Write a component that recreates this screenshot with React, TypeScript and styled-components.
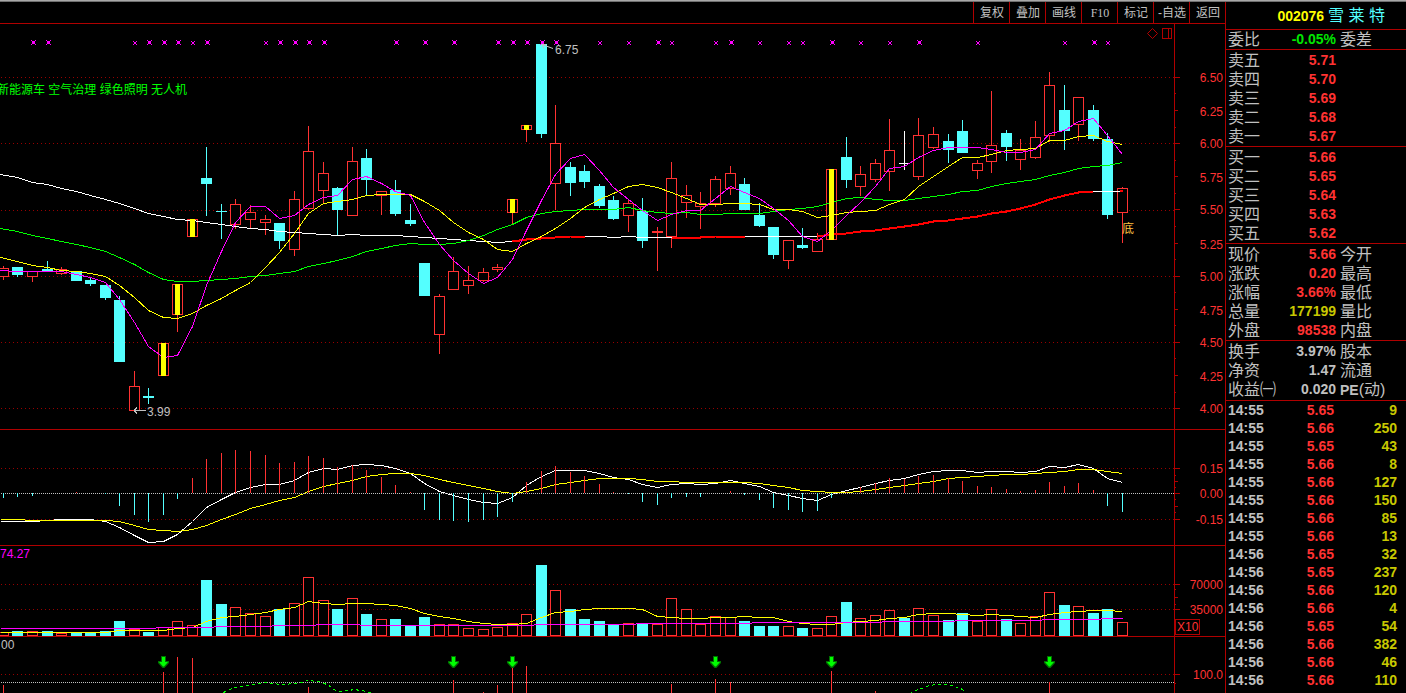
import React from "react";
import styled, { createGlobalStyle } from "styled-components";

const C = {
  line: "#b00000",
  grid: "#980000",
  red: "#ff3232",
  cyan: "#54ffff",
  yellow: "#ffff00",
  gold: "#c8c800",
  grey: "#c0c0c0",
  magenta: "#ff00ff",
  green: "#00ff00",
};

const SANS = `"Liberation Sans", "Noto Sans CJK SC", sans-serif`;

const GlobalStyle = createGlobalStyle`
  body { margin: 0; background: #000; color: ${C.grey}; font-family: ${SANS}; }
  * { box-sizing: border-box; }
`;

/* ---------- page parts ---------- */

const Screen = styled.div`
  min-height: 100vh;
  display: flex;
  flex-direction: column;
  background: #000;
`;

const WindowEdge = styled.div`
  height: 2px;
  border-top: 1px solid #a8a8a8;
  background: #707070;
`;

const Workspace = styled.main`
  flex: 1;
  display: grid;
  grid-template-columns: minmax(0, 1fr) 181px;
`;

const Charts = styled.section`
  display: flex;
  flex-direction: column;
  min-width: 0;
`;

const Toolbar = styled.nav`
  height: 22px;
  display: flex;
  justify-content: flex-end;
  border-bottom: 1px solid ${C.line};
`;

const ToolButton = styled.button<{ $latin?: boolean }>`
  width: 36px;
  padding: 0 0 0 1px;
  border: 0;
  border-left: 1px solid ${C.line};
  background: none;
  color: ${C.grey};
  font-family: ${(p) => (p.$latin ? `"Liberation Serif", serif` : SANS)};
  font-size: 12px;
  line-height: 20px;
  white-space: nowrap;
  cursor: pointer;
`;

const Panel = styled.div<{ $last?: boolean }>`
  border-bottom: ${(p) => (p.$last ? "0" : `1px solid ${C.line}`)};
`;

const Plot = styled.svg<{ $h: number }>`
  display: block;
  width: 100%;
  height: ${(p) => p.$h}px;
  font-family: ${SANS};
  font-size: 12px;
`;

const Side = styled.aside`
  border-left: 1px solid ${C.line};
`;

const StockHeader = styled.h1`
  height: 28px;
  margin: 0;
  padding-right: 21px;
  display: flex;
  align-items: center;
  justify-content: flex-end;
  gap: 4px;
  border-bottom: 1px solid ${C.line};
  font-size: 16px;
  font-weight: 400;
  line-height: 20px;
  color: ${C.cyan};
`;

const Code = styled.span`
  font-size: 14px;
  font-weight: 700;
  color: ${C.yellow};
`;

const Block = styled.div<{ $pad: string }>`
  padding: ${(p) => p.$pad};
  border-bottom: 1px solid ${C.line};
`;

const DataTable = styled.table`
  width: 100%;
  table-layout: fixed;
  border-collapse: collapse;
`;

const Label = styled.th<{ $second?: boolean }>`
  width: ${(p) => (p.$second ? "auto" : "50px")};
  height: 19px;
  padding: 0 0 0 ${(p) => (p.$second ? 4 : 2)}px;
  font-size: 16px;
  font-weight: 400;
  line-height: 19px;
  text-align: left;
  white-space: nowrap;
`;

const Latin = styled.span`
  font-size: 14px;
  font-weight: 700;
  line-height: 1;
`;

const Value = styled.td<{ $color: string }>`
  width: 60px;
  height: 19px;
  padding: 0;
  color: ${(p) => p.$color};
  font-size: 14px;
  font-weight: 700;
  line-height: 19px;
  text-align: right;
`;

const Tick = styled.td<{ $kind: "time" | "price" | "lot" }>`
  width: ${(p) => (p.$kind === "lot" ? "auto" : "54px")};
  height: 18px;
  padding: ${(p) => (p.$kind === "time" ? "0 0 0 2px" : p.$kind === "lot" ? "0 9px 0 0" : "0")};
  color: ${(p) => ({ time: C.grey, price: C.red, lot: C.gold })[p.$kind]};
  font-size: 14px;
  font-weight: 700;
  line-height: 18px;
  text-align: ${(p) => (p.$kind === "time" ? "left" : "right")};
`;

/* ---------- chart data ---------- */

type Kind = "u" | "d" | "s" | "w" | "f";
/* kind, body top, body bottom, high, low, volume top, MACD bar end */
type Bar = [Kind, number, number, number, number, number, number];

const bars: Bar[] = [
  ["u", 268, 276, 266, 279, 632, 498], ["d", 267, 274, 267, 276, 631, 497], ["u", 271, 276, 271, 281, 631, 496],
  ["d", 269, 271, 261, 271, 631, 493], ["u", 269, 273, 267, 274, 633, 493], ["d", 271, 280, 271, 280, 633, 492],
  ["d", 280, 283, 277, 285, 633, 493], ["d", 285, 297, 285, 299, 631, 494], ["d", 300, 361, 296, 361, 621, 506],
  ["u", 386, 410, 371, 410, 629, 515], ["d", 396, 397, 388, 403, 632, 522], ["s", 343, 375, 343, 375, 627, 515],
  ["s", 284, 314, 284, 331, 621, 499], ["s", 219, 236, 219, 236, 625, 478], ["d", 178, 183, 147, 215, 580, 459],
  ["d", 211, 211, 204, 238, 604, 453], ["u", 204, 224, 199, 228, 607, 450], ["u", 212, 219, 205, 227, 613, 451],
  ["u", 219, 222, 215, 234, 616, 455], ["d", 223, 240, 223, 248, 609, 463], ["u", 199, 249, 191, 255, 603, 462],
  ["u", 151, 208, 126, 209, 577, 456], ["u", 173, 190, 162, 202, 600, 458], ["d", 188, 209, 187, 234, 609, 467],
  ["u", 161, 215, 147, 215, 598, 465], ["d", 158, 179, 149, 194, 614, 470], ["u", 191, 195, 191, 214, 619, 477],
  ["d", 190, 213, 180, 215, 619, 485], ["d", 220, 223, 204, 225, 625, 492], ["d", 263, 295, 263, 295, 617, 510],
  ["u", 296, 334, 294, 353, 624, 520], ["u", 271, 289, 257, 289, 624, 521], ["u", 280, 285, 266, 293, 628, 522],
  ["u", 272, 280, 268, 281, 629, 520], ["u", 267, 269, 264, 271, 627, 517], ["s", 199, 212, 199, 223, 623, 502],
  ["s", 125, 129, 125, 141, 614, 482], ["d", 44, 133, 44, 137, 565, 471], ["u", 143, 183, 105, 209, 590, 466],
  ["d", 167, 182, 162, 195, 609, 472], ["d", 171, 181, 165, 187, 619, 476], ["d", 186, 205, 184, 207, 621, 484],
  ["d", 200, 218, 196, 219, 625, 492], ["u", 203, 215, 200, 231, 623, 494], ["d", 211, 240, 198, 247, 624, 502],
  ["f", 231, 232, 227, 270, 624, 505], ["u", 178, 236, 162, 247, 598, 498], ["u", 195, 202, 185, 217, 609, 497],
  ["u", 203, 206, 192, 228, 624, 497], ["u", 179, 203, 176, 206, 616, 493], ["u", 173, 188, 166, 194, 617, 491],
  ["d", 184, 209, 178, 209, 621, 495], ["d", 215, 225, 203, 226, 626, 500], ["d", 227, 254, 227, 258, 626, 508],
  ["u", 240, 260, 240, 268, 626, 510], ["d", 245, 247, 228, 248, 628, 512], ["u", 239, 251, 233, 251, 628, 511],
  ["s", 169, 239, 169, 239, 616, 498], ["d", 157, 179, 137, 187, 602, 492], ["u", 174, 186, 166, 195, 618, 487],
  ["u", 163, 179, 159, 181, 615, 483], ["u", 150, 171, 119, 190, 610, 478], ["w", 163, 163, 131, 169, 618, 479],
  ["u", 135, 176, 118, 179, 608, 476], ["u", 134, 147, 127, 148, 615, 475], ["d", 141, 149, 134, 162, 620, 478],
  ["d", 131, 152, 120, 152, 613, 481], ["u", 163, 170, 160, 178, 621, 486], ["u", 145, 161, 91, 172, 609, 487],
  ["d", 133, 146, 130, 160, 619, 489], ["u", 150, 159, 139, 169, 623, 491], ["u", 137, 157, 121, 158, 616, 490],
  ["u", 85, 135, 72, 141, 592, 482], ["d", 110, 130, 85, 149, 605, 486], ["u", 97, 124, 97, 140, 606, 483],
  ["d", 110, 138, 105, 140, 613, 490], ["d", 139, 214, 133, 218, 609, 506], ["u", 188, 212, 187, 242, 622, 512],
];

const ma5 = [270, 271, 271, 271, 271, 274, 277, 282, 299, 322, 346, 357, 355, 326, 285, 251, 222, 206, 206, 218, 215, 204, 197, 195, 179, 176, 183, 191, 195, 222, 244, 260, 273, 283, 277, 259, 230, 200, 174, 158, 154, 170, 187, 199, 210, 220, 214, 210, 210, 198, 186, 192, 198, 208, 220, 236, 241, 230, 215, 202, 186, 168, 166, 157, 150, 147, 147, 147, 149, 152, 152, 149, 133, 130, 121, 118, 135, 154];
const ma10 = [257, 261, 265, 267, 270, 271, 273, 276, 285, 297, 310, 317, 318, 313, 305, 298, 290, 282, 267, 252, 233, 213, 203, 201, 199, 195, 194, 194, 194, 201, 210, 222, 232, 239, 249, 251, 243, 236, 228, 218, 207, 199, 193, 186, 184, 187, 192, 198, 204, 204, 203, 203, 204, 209, 209, 211, 217, 215, 212, 211, 210, 204, 199, 186, 176, 166, 157, 157, 154, 150, 149, 148, 140, 140, 136, 135, 141, 144];
const ma30 = [228, 231, 235, 238, 241, 244, 247, 251, 257, 264, 272, 279, 281, 281, 280, 279, 278, 276, 275, 273, 271, 266, 263, 260, 256, 251, 248, 245, 243, 244, 244, 243, 240, 235, 229, 224, 217, 213, 211, 210, 209, 209, 209, 207, 210, 212, 213, 212, 214, 214, 213, 213, 213, 211, 209, 208, 206, 202, 198, 197, 199, 200, 200, 198, 196, 194, 191, 190, 186, 183, 181, 179, 175, 172, 168, 166, 165, 162];
const ma60 = [174, 177, 182, 184, 188, 191, 195, 199, 203, 208, 213, 216, 219, 220, 222, 224, 226, 228, 229, 231, 232, 233, 234, 235, 234, 235, 235, 235, 236, 237, 238, 239, 240, 241, 242, 241, 239, 238, 237, 236, 236, 236, 237, 236, 237, 237, 237, 237, 237, 236, 236, 236, 236, 236, 236, 236, 236, 234, 233, 231, 230, 228, 226, 224, 221, 220, 218, 216, 213, 211, 208, 204, 199, 195, 192, 191, 191, 191];
const dif = [521, 521, 521, 520, 519, 519, 519, 521, 527, 535, 542, 541, 534, 521, 507, 499, 492, 487, 484, 484, 480, 472, 468, 469, 465, 464, 465, 468, 473, 483, 491, 495, 499, 502, 503, 497, 485, 476, 470, 470, 470, 473, 477, 479, 484, 487, 484, 483, 484, 483, 480, 483, 486, 492, 495, 498, 500, 494, 490, 487, 483, 480, 478, 474, 471, 470, 470, 472, 471, 471, 472, 471, 466, 467, 464, 468, 478, 482];
const dea = [519, 519, 520, 520, 520, 520, 520, 520, 521, 525, 529, 530, 531, 529, 525, 519, 514, 508, 504, 500, 497, 491, 486, 483, 480, 476, 474, 473, 473, 475, 479, 482, 485, 488, 491, 493, 491, 488, 484, 482, 480, 478, 478, 478, 479, 481, 481, 482, 482, 482, 482, 482, 483, 485, 487, 490, 491, 492, 492, 491, 489, 487, 485, 483, 481, 478, 477, 476, 475, 474, 474, 473, 472, 471, 469, 469, 471, 473];
const vol5 = [632, 632, 632, 632, 632, 632, 632, 632, 630, 630, 630, 630, 628, 627, 621, 617, 616, 614, 612, 609, 607, 601, 603, 604, 603, 603, 604, 605, 608, 613, 616, 618, 621, 623, 624, 624, 623, 617, 612, 611, 609, 608, 608, 608, 609, 616, 617, 618, 618, 617, 617, 616, 617, 617, 621, 623, 624, 624, 622, 621, 620, 618, 617, 614, 613, 613, 614, 615, 614, 615, 616, 617, 614, 612, 611, 610, 610, 611];
const volLong: [number, number][] = [
  [0, 628], [155, 628], [156, 627], [213, 627], [214, 626], [271, 626], [272, 625], [315, 625], [316, 624], [359, 624], [360, 625],
  [533, 625], [534, 624], [635, 624], [636, 623], [751, 623], [752, 622], [881, 622], [882, 621], [954, 621], [955, 620],
  [1041, 620], [1042, 619], [1100, 619], [1101, 618], [1122, 618],
];

/* runs where the long average is in its strong phase */
const strongRuns: [number, number][] = [[35, 40], [46, 51], [56, 75]];

const bigMarks = [2, 3, 10, 11, 12, 14, 19, 20, 21, 22, 27, 29, 31, 34, 35, 36, 37, 38, 45, 50, 57, 63, 75];
const smallMarks = [9, 13, 18, 41, 43, 46, 49, 52, 54, 55, 59, 61, 67, 73, 76];

const spikes: [number, number][] = [
  [0, 685], [11, 672], [12, 657], [13, 658], [21, 687], [31, 680], [33, 692], [34, 685], [35, 668], [36, 666],
  [46, 684], [49, 679], [50, 682], [57, 671], [60, 691], [72, 682],
];
const signals = [11, 31, 35, 49, 57, 72];

const trendLeft: [number, number][] = [
  [223, 692], [229, 689], [235, 687], [247, 685], [264, 682], [270, 683], [283, 684], [295, 683], [301, 682], [307, 680],
  [318, 681], [324, 683], [330, 686], [336, 691], [348, 690], [354, 689], [366, 691], [372, 693],
];
const trendRight: [number, number][] = [
  [909, 693], [918, 689], [929, 685], [936, 684], [947, 684], [954, 686], [960, 688], [967, 692],
];

const xAt = (i: number) => Math.round(2.95 + 14.532 * i);
const toPoints = (pts: [number, number][]) => pts.map(([x, y]) => `${x + 0.5},${y + 0.5}`).join(" ");
const series = (ys: number[], from = 0) => ys.map((y, k) => [k + from === 0 ? 0 : xAt(k + from), y] as [number, number]);

/* ---------- chart pieces ---------- */

const Line = ({ pts, color, width = 1, dash }: { pts: [number, number][]; color: string; width?: number; dash?: string }) => (
  <polyline points={toPoints(pts)} fill="none" stroke={color} strokeWidth={width} strokeDasharray={dash} shapeRendering="crispEdges" />
);

const Grid = ({ y, color = C.grid, step = 4 }: { y: number; color?: string; step?: number }) => (
  <line x1={1} x2={1174} y1={y + 0.5} y2={y + 0.5} stroke={color} strokeDasharray={`1 ${step - 1}`} shapeRendering="crispEdges" />
);

const AxisTick = ({ y, size }: { y: number; size: number }) => (
  <rect x={1175} y={y} width={size} height={1} fill={C.line} />
);

const AxisLabel = ({ y, children }: { y: number; children: React.ReactNode }) => (
  <text x={1223} y={y + 5} textAnchor="end" fill={C.red}>{children}</text>
);

const Spine = ({ top, height }: { top: number; height: number }) => (
  <rect x={1174} y={top} width={1} height={height} fill={C.line} />
);

const Candle = ({ x, bar }: { x: number; bar: Bar }) => {
  const [kind, top, bottom, high, low] = bar;
  const color = kind === "d" ? C.cyan : kind === "w" ? "#ffffff" : C.red;
  const h = bottom - top + 1;
  const solid = kind === "d" || kind === "w" || kind === "f";
  return (
    <g shapeRendering="crispEdges">
      {high < top && <rect x={x} y={high} width={1} height={top - high} fill={color} />}
      {low > bottom && <rect x={x} y={bottom + 1} width={1} height={low - bottom} fill={color} />}
      {solid ? (
        <rect x={x - 5} y={top} width={kind === "w" ? 9 : 11} height={h} fill={color} />
      ) : (
        <rect x={x - 4.5} y={top + 0.5} width={10} height={h - 1} fill="#000" stroke={color} />
      )}
    </g>
  );
};

const Mark = ({ x, big }: { x: number; big?: boolean }) => (
  <path
    transform={`translate(${x} 0)`}
    shapeRendering="crispEdges"
    fill={C.magenta}
    d={
      big
        ? "M-1 40h1v1h-1zM3 40h1v1h-1zM0 41h3v3h-3zM-1 44h1v1h-1zM3 44h1v1h-1z"
        : "M-1 41h1v1h-1zM2 41h1v1h-1zM0 42h2v2h-2zM-1 44h1v1h-1zM2 44h1v1h-1z"
    }
  />
);

const Signal = ({ x }: { x: number }) => (
  <g transform={`translate(${x + 0.5} 0)`}>
    <path d="M-2.5 656h5v5h3v2l-4.500 5h-2l-4.500-5v-2h3z" fill="#007000" />
    <path d="M-1.500 657h3v5h3l-4 4.500h-1l-4-4.500h3z" fill={C.green} />
  </g>
);

const PricePanel = () => (
  <Panel>
    <Plot $h={405} viewBox="0 24 1225 405" preserveAspectRatio="xMaxYMin slice" role="img" aria-label="日K线">
      {[77, 143, 210, 276, 342, 408].map((y) => <Grid key={y} y={y} />)}
      <Spine top={24} height={405} />
      {Array.from({ length: 21 }, (_, k) => (
        <AxisTick key={k} y={Math.round(76.900 + k * 16.560)} size={k % 4 === 0 ? 5 : k % 2 === 0 ? 3 : 1} />
      ))}
      {Array.from({ length: 11 }, (_, k) => (
        <AxisLabel key={k} y={Math.round(76.900 + k * 33.120) + (k % 2)}>{(6.5 - k * 0.25).toFixed(2)}</AxisLabel>
      ))}
      {bars.map((b, i) => <Candle key={i} x={xAt(i)} bar={b} />)}
      <Line pts={series(ma60)} color="#ffffff" />
      {strongRuns.map(([a, b]) => (
        <Line key={a} pts={series(ma60.slice(a, b + 1), a)} color="#ff0000" width={2} />
      ))}
      <rect x={1120} y={190} width={3} height={2} fill="#ff0000" />
      <Line pts={series(ma30)} color={C.green} />
      <Line pts={series(ma10)} color={C.yellow} />
      <Line pts={series(ma5)} color={C.magenta} />
      {bars.map(([kind, top, bottom], i) =>
        kind === "s" ? <rect key={i} x={xAt(i) - 2} y={top} width={5} height={bottom - top + 1} fill={C.yellow} /> : null,
      )}
      {bigMarks.map((i) => <Mark key={i} x={xAt(i)} big />)}
      {smallMarks.map((i) => <Mark key={i} x={xAt(i)} />)}
      <text x={-3} y={94} fill={C.green}>新能源车 空气治理 绿色照明 无人机</text>
      <path d="M134 410.500h12M134 410.500l3-3M134 410.500l3 3" stroke={C.grey} fill="none" shapeRendering="crispEdges" />
      <text x={147} y={416} fill={C.grey}>3.99</text>
      <path d="M542 44.500l11 4M542 44.500h4M542 44.500l2 4" stroke={C.grey} fill="none" />
      <text x={555} y={54} fill={C.grey}>6.75</text>
      <text x={1122} y={233} fill="#ffc040">底</text>
      <path d="M1152.500 28.500l5 5l-5 5l-5-5z" stroke={C.line} fill="none" />
      <path d="M1162.500 28.500h9v10h-9zM1168.500 28.500v10" stroke={C.line} fill="none" shapeRendering="crispEdges" />
    </Plot>
  </Panel>
);

const MacdPanel = () => (
  <Panel>
    <Plot $h={115} viewBox="0 430 1225 115" preserveAspectRatio="xMaxYMin slice" role="img" aria-label="MACD">
      <Grid y={468} />
      <Grid y={519} />
      <Spine top={430} height={115} />
      {[468, 475, 481, 487, 493, 499, 506, 512, 519].map((y, k) => (
        <AxisTick key={y} y={y} size={k % 4 === 0 ? 5 : k % 2 === 0 ? 3 : 1} />
      ))}
      <AxisLabel y={468}>0.15</AxisLabel>
      <AxisLabel y={493}>0.00</AxisLabel>
      <AxisLabel y={519}>-0.15</AxisLabel>
      <Line pts={series(dif)} color="#ffffff" />
      <Line pts={series(dea)} color={C.yellow} />
      <Grid y={493} color={C.grey} step={2} />
      {bars.map((b, i) =>
        b[6] === 493 ? null : (
          <rect key={i} x={xAt(i)} y={Math.min(b[6], 493)} width={1} height={Math.abs(b[6] - 493)} fill={b[6] < 493 ? C.red : C.cyan} />
        ),
      )}
    </Plot>
  </Panel>
);

const VolumePanel = () => (
  <Panel>
    <Plot $h={90} viewBox="0 546 1225 90" preserveAspectRatio="xMaxYMin slice" role="img" aria-label="成交量">
      <Grid y={584} />
      <Grid y={609} />
      <Spine top={546} height={90} />
      {[584, 589, 597, 604, 609].map((y, k) => (
        <AxisTick key={y} y={y} size={k % 4 === 0 ? 5 : k % 2 === 0 ? 3 : 1} />
      ))}
      <AxisLabel y={584}>70000</AxisLabel>
      <AxisLabel y={609}>35000</AxisLabel>
      {bars.map((b, i) => {
        const x = xAt(i);
        return b[0] === "d" || b[0] === "w" ? (
          <rect key={i} x={x - 5} y={b[5]} width={11} height={636 - b[5]} fill={C.cyan} />
        ) : (
          <rect key={i} x={x - 4.5} y={b[5] + 0.5} width={10} height={635 - b[5]} fill="#000" stroke={C.red} shapeRendering="crispEdges" />
        );
      })}
      <Line pts={series(vol5)} color={C.yellow} />
      <Line pts={volLong} color={C.magenta} />
      <text x={0} y={558} fill={C.magenta}>74.27</text>
      <rect x={1175.5} y={619.5} width={24} height={15} fill="#000" stroke={C.line} />
      <text x={1177} y={631} fill={C.red}>X10</text>
    </Plot>
  </Panel>
);

const SignalPanel = () => (
  <Panel $last>
    <Plot $h={56} viewBox="0 637 1225 56" preserveAspectRatio="xMaxYMin slice" role="img" aria-label="信号指标">
      <Grid y={674} />
      <Grid y={682} color={C.grey} step={2} />
      <Spine top={637} height={56} />
      <AxisTick y={674} size={5} />
      <AxisTick y={683} size={1} />
      <AxisLabel y={674}>100.0</AxisLabel>
      {spikes.map(([i, y]) => <rect key={i} x={xAt(i)} y={y} width={1} height={693 - y} fill={C.red} />)}
      <Line pts={trendLeft} color={C.green} dash="3 3" />
      <Line pts={trendRight} color={C.green} dash="3 3" />
      {signals.map((i) => <Signal key={i} x={xAt(i)} />)}
      <text x={1} y={649} fill={C.grey}>00</text>
    </Plot>
  </Panel>
);

/* ---------- side panel ---------- */

type QuoteRow = { label: string; value: string; color?: string; second?: React.ReactNode };

const QuoteBlock = ({ rows, pad = "1px 0 0" }: { rows: QuoteRow[]; pad?: string }) => (
  <Block $pad={pad}>
    <DataTable>
      <tbody>
        {rows.map((r) => (
          <tr key={r.label}>
            <Label scope="row">{r.label}</Label>
            <Value $color={r.color ?? C.red}>{r.value}</Value>
            <Label as={r.second ? "th" : "td"} $second>{r.second}</Label>
          </tr>
        ))}
      </tbody>
    </DataTable>
  </Block>
);

const asks: QuoteRow[] = [
  { label: "卖五", value: "5.71" }, { label: "卖四", value: "5.70" }, { label: "卖三", value: "5.69" },
  { label: "卖二", value: "5.68" }, { label: "卖一", value: "5.67" },
];
const bids: QuoteRow[] = [
  { label: "买一", value: "5.66" }, { label: "买二", value: "5.65" }, { label: "买三", value: "5.64" },
  { label: "买四", value: "5.63" }, { label: "买五", value: "5.62" },
];
const quote: QuoteRow[] = [
  { label: "现价", value: "5.66", second: "今开" },
  { label: "涨跌", value: "0.20", second: "最高" },
  { label: "涨幅", value: "3.66%", second: "最低" },
  { label: "总量", value: "177199", color: C.gold, second: "量比" },
  { label: "外盘", value: "98538", second: "内盘" },
];
const basics: QuoteRow[] = [
  { label: "换手", value: "3.97%", color: C.grey, second: "股本" },
  { label: "净资", value: "1.47", color: C.grey, second: "流通" },
  { label: "收益㈠", value: "0.020", color: C.grey, second: <><Latin>PE</Latin>(动)</> },
];
const trades: [string, string, string][] = [
  ["14:55", "5.65", "9"], ["14:55", "5.66", "250"], ["14:55", "5.65", "43"], ["14:55", "5.66", "8"],
  ["14:55", "5.66", "127"], ["14:55", "5.66", "150"], ["14:55", "5.66", "85"], ["14:55", "5.66", "13"],
  ["14:56", "5.65", "32"], ["14:56", "5.65", "237"], ["14:56", "5.66", "120"], ["14:56", "5.66", "4"],
  ["14:56", "5.65", "54"], ["14:56", "5.66", "382"], ["14:56", "5.66", "46"], ["14:56", "5.66", "110"],
];

export default function App() {
  return (
    <Screen>
      <GlobalStyle />
      <WindowEdge />
      <Workspace>
        <Charts>
          <Toolbar>
            {["复权", "叠加", "画线", "F10", "标记", "-自选", "返回"].map((t) => (
              <ToolButton key={t} type="button" $latin={t === "F10"}>{t}</ToolButton>
            ))}
          </Toolbar>
          <PricePanel />
          <MacdPanel />
          <VolumePanel />
          <SignalPanel />
        </Charts>
        <Side>
          <StockHeader>
            <Code>002076</Code>
            <span>雪 莱 特</span>
          </StockHeader>
          <QuoteBlock pad="0" rows={[{ label: "委比", value: "-0.05%", color: "#00e600", second: "委差" }]} />
          <QuoteBlock rows={asks} />
          <QuoteBlock rows={bids} />
          <QuoteBlock rows={quote} />
          <QuoteBlock rows={basics} pad="1px 0" />
          <DataTable>
            <tbody>
              {trades.map(([time, price, lot], i) => (
                <tr key={i}>
                  <Tick $kind="time">{time}</Tick>
                  <Tick $kind="price">{price}</Tick>
                  <Tick $kind="lot">{lot}</Tick>
                </tr>
              ))}
            </tbody>
          </DataTable>
        </Side>
      </Workspace>
    </Screen>
  );
}
